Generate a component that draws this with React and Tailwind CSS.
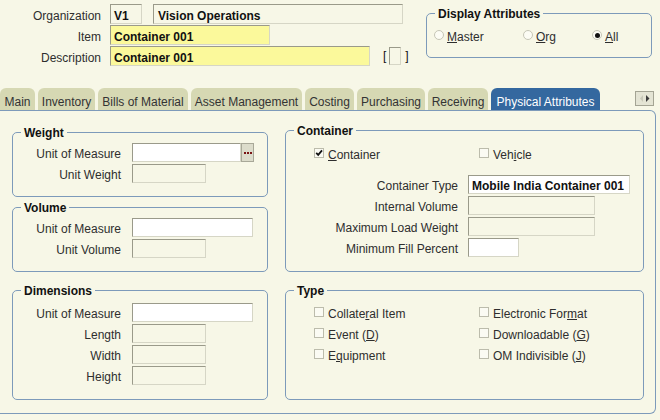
import React from "react";

const box =
  "border border-t-[#9a9a8a] border-l-[#9a9a8a] border-r-[#d6d6c6] border-b-[#d6d6c6]";

function Field({ className = "", children }) {
  return (
    <div className={`${box} flex items-center pl-[3px] pt-[3px] ${className}`}>
      {children}
    </div>
  );
}

function Label({ children }) {
  return <div className="text-right self-center pt-[3px]">{children}</div>;
}

function Check({ checked, children }) {
  return (
    <div className="flex items-center gap-[4px]">
      <span className="w-[10px] h-[10px] border border-[#bcbcac] bg-[#fbfbf3] flex items-center justify-center">
        {checked && (
          <svg width="10" height="10" viewBox="0 0 10 10">
            <path d="M1.5 4.8 L4 7.3 L8.8 1.8" fill="none" stroke="#111" strokeWidth="2.2" />
          </svg>
        )}
      </span>
      <span className="pt-[3px]">{children}</span>
    </div>
  );
}

function Radio({ on, children }) {
  return (
    <div className="flex items-center gap-[3px]">
      <span className="w-[10px] h-[10px] rounded-full border border-[#c6c6b6] bg-[#fcfcf4] flex items-center justify-center">
        {on && <span className="w-[5px] h-[5px] rounded-full bg-[#111]" />}
      </span>
      <span className="pt-[3px]">{children}</span>
    </div>
  );
}

function Group({ title, className = "", children }) {
  return (
    <fieldset className={`border border-[#7d9aba] rounded-[5px] ${className}`}>
      <legend className="ml-[8px] px-[3px] font-bold text-[12px] leading-[14px] text-[#111]">
        <span className="relative top-[1px]">{title}</span>
      </legend>
      {children}
    </fieldset>
  );
}

const tabs = [
  ["Main", "w-[35px]"],
  ["Inventory", "w-[57px]"],
  ["Bills of Material", "w-[90px]"],
  ["Asset Management", "w-[111px]"],
  ["Costing", "w-[49px]"],
  ["Purchasing", "w-[68px]"],
  ["Receiving", "w-[60px]"],
];

export default function App() {
  return (
    <div className="w-[660px] h-[420px] overflow-hidden bg-[#f7f7e7] font-['Liberation_Sans',Arial,sans-serif] text-[12px] text-[#2e2e2e]">
      {/* header */}
      <div className="h-[88px] flex">
        <div className="w-[426px] pt-[4px] grid grid-cols-[101px_auto] gap-x-[9px] gap-y-[1px] auto-rows-[20px] content-start">
          <Label>Organization</Label>
          <div className="flex gap-[11px] font-bold text-[#111]">
            <Field className="h-[20px] w-[32px]">V1</Field>
            <Field className="h-[20px] w-[250px] pl-[4px]">Vision Operations</Field>
          </div>
          <Label>Item</Label>
          <div className="flex font-bold text-[#111]">
            <Field className="h-[20px] w-[160px] bg-[#fbf99b]">Container 001</Field>
          </div>
          <Label>Description</Label>
          <div className="flex items-center font-bold text-[#111]">
            <Field className="h-[20px] w-[260px] bg-[#fbf99b]">Container 001</Field>
            <span className="ml-[13px] font-normal">[</span>
            <span className={`ml-[3px] w-[12px] h-[18px] ${box}`} />
            <span className="ml-[4px] font-normal">]</span>
          </div>
        </div>
        <Group title="Display Attributes" className="mt-[6px] w-[226px] h-[52px]">
          <div className="mt-[7px] pl-[7px] h-[16px] flex items-center">
            <div className="w-[89px]">
              <Radio><u>M</u>aster</Radio>
            </div>
            <div className="w-[69px]">
              <Radio><u>O</u>rg</Radio>
            </div>
            <Radio on><u>A</u>ll</Radio>
          </div>
        </Group>
      </div>

      {/* tabs */}
      <div className="h-[22px] flex items-end">
        <div className="flex gap-[3px] h-[22px]">
          {tabs.map(([t, w]) => (
            <div
              key={t}
              className={`${w} h-[22px] rounded-t-[6px] bg-[#d6d8b3] flex justify-center pt-[5px] text-[#333] whitespace-nowrap`}
            >
              {t}
            </div>
          ))}
          <div className="w-[109px] h-[22px] rounded-t-[6px] bg-[#34689f] flex justify-center pt-[5px] text-white whitespace-nowrap">
            Physical Attributes
          </div>
        </div>
        <div className="ml-auto mr-[6px] self-start mt-[3px] w-[19px] h-[15px] border border-[#a4a494] bg-[#e4e4d4] flex items-center justify-center">
          <svg width="12" height="9" viewBox="0 0 12 9">
            <path d="M4 1 L1 4.5 L4 8 Z" fill="#c8c8b8" />
            <path d="M7 1 L10.5 4.5 L7 8 Z" fill="#3c3c3c" />
          </svg>
        </div>
      </div>

      {/* panel */}
      <div className="w-[656px] h-[304px] border border-l-0 border-[#7d9aba] rounded-r-[6px] pl-[12px] pt-[12px] grid grid-cols-[256px_359px] grid-rows-[149px_117px] gap-x-[17px] gap-y-[11px]">
        <div className="flex flex-col">
          <Group title="Weight" className="mt-[2px] h-[72px]">
            <div className="mt-[4px] grid grid-cols-[108px_auto] gap-x-[11px] gap-y-[2px] auto-rows-[19px]">
              <Label>Unit of Measure</Label>
              <div className="flex">
                <Field className="h-[19px] w-[109px] bg-white" />
                <div className="h-[19px] w-[13px] border border-[#a8a898] bg-[#dcdccb] flex items-center justify-center gap-[1px]">
                  <span className="w-[2px] h-[2px] bg-[#7a1414]" />
                  <span className="w-[2px] h-[2px] bg-[#7a1414]" />
                  <span className="w-[2px] h-[2px] bg-[#7a1414]" />
                </div>
              </div>
              <Label>Unit Weight</Label>
              <Field className="h-[19px] w-[74px]" />
            </div>
          </Group>
          <Group title="Volume" className="mt-[3px] h-[72px]">
            <div className="mt-[4px] grid grid-cols-[108px_auto] gap-x-[11px] gap-y-[2px] auto-rows-[19px]">
              <Label>Unit of Measure</Label>
              <Field className="h-[19px] w-[121px] bg-white" />
              <Label>Unit Volume</Label>
              <Field className="h-[19px] w-[74px]" />
            </div>
          </Group>
        </div>

        <Group title="Container" className="h-[149px]">
          <div className="mt-[8px] pl-[28px] h-[16px] flex items-center">
            <div className="w-[165px]">
              <Check checked><u>C</u>ontainer</Check>
            </div>
            <Check>Veh<u>i</u>cle</Check>
          </div>
          <div className="mt-[14px] grid grid-cols-[172px_auto] gap-x-[10px] gap-y-[2px] auto-rows-[19px]">
            <Label>Container Type</Label>
            <Field className="h-[19px] w-[162px] bg-white font-bold text-[#111]">Mobile India Container 001</Field>
            <Label>Internal Volume</Label>
            <Field className="h-[19px] w-[127px]" />
            <Label>Maximum Load Weight</Label>
            <Field className="h-[19px] w-[127px]" />
            <Label>Minimum Fill Percent</Label>
            <Field className="h-[19px] w-[51px] bg-white" />
          </div>
        </Group>

        <Group title="Dimensions" className="h-[117px]">
          <div className="mt-[6px] grid grid-cols-[108px_auto] gap-x-[11px] gap-y-[2px] auto-rows-[19px]">
            <Label>Unit of Measure</Label>
            <Field className="h-[19px] w-[121px] bg-white" />
            <Label>Length</Label>
            <Field className="h-[19px] w-[74px]" />
            <Label>Width</Label>
            <Field className="h-[19px] w-[74px]" />
            <Label>Height</Label>
            <Field className="h-[19px] w-[74px]" />
          </div>
        </Group>

        <Group title="Type" className="h-[117px]">
          <div className="mt-[7px] pl-[28px] grid grid-cols-[165px_auto] auto-rows-[16px] gap-y-[5px]">
            <Check>Collate<u>r</u>al Item</Check>
            <Check>Electronic For<u>m</u>at</Check>
            <Check>Event (<u>D</u>)</Check>
            <Check>Downloadable (<u>G</u>)</Check>
            <Check>E<u>q</u>uipment</Check>
            <Check>OM Indivisible (<u>J</u>)</Check>
          </div>
        </Group>
      </div>
    </div>
  );
}
